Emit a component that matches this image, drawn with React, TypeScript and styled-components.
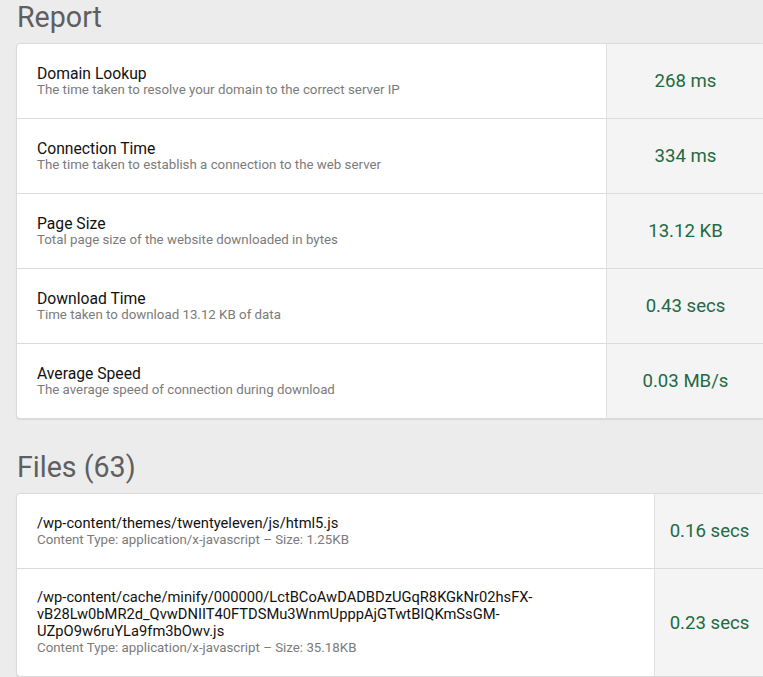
import React from "react";
import styled, { createGlobalStyle } from "styled-components";

const GlobalStyle = createGlobalStyle`
  html, body {
    margin: 0;
    padding: 0;
    background: #ececec;
    overflow: hidden;
  }
  body {
    font-family: Roboto, "Liberation Sans", Arial, sans-serif;
    -webkit-font-smoothing: antialiased;
  }
`;

const Page = styled.div`
  padding: 0 0 0 16px;
  width: 749px;
`;

const Heading = styled.h2`
  margin: 0;
  font-size: 28.6px;
  line-height: 34px;
  font-weight: 400;
  color: #5f5f5f;
  padding-left: 1px;
`;

const Card = styled.div`
  margin: 9px 0 31px;
  background: #fff;
  border: 1px solid #dadada;
  border-radius: 4px;
  box-shadow: 0 1px 1px rgba(0, 0, 0, 0.08);
  overflow: hidden;
`;

const Row = styled.div<{ $valueWidth: number }>`
  display: grid;
  grid-template-columns: 1fr ${(p) => p.$valueWidth}px;
  border-top: 1px solid #dcdcdc;
  &:first-child {
    border-top: none;
  }
`;

const Info = styled.div<{ $minHeight: number }>`
  display: flex;
  flex-direction: column;
  justify-content: center;
  min-height: ${(p) => p.$minHeight}px;
  padding: 20px;
  box-sizing: border-box;
`;

const Title = styled.div`
  font-size: 15.7px;
  line-height: 17px;
  color: #111;
`;

const Path = styled.div`
  font-size: 14.7px;
  line-height: 17px;
  color: #111;
  overflow-wrap: anywhere;
`;

const Sub = styled.div`
  font-size: 13.3px;
  line-height: 16px;
  color: #7b7b7b;
`;

const Value = styled.div`
  display: flex;
  align-items: center;
  justify-content: center;
  background: #f4f4f4;
  border-left: 1px solid #e2e2e2;
  font-size: 18.6px;
  color: #1f6a42;
`;

const report = [
  { title: "Domain Lookup", sub: "The time taken to resolve your domain to the correct server IP", value: "268 ms" },
  { title: "Connection Time", sub: "The time taken to establish a connection to the web server", value: "334 ms" },
  { title: "Page Size", sub: "Total page size of the website downloaded in bytes", value: "13.12 KB" },
  { title: "Download Time", sub: "Time taken to download 13.12 KB of data", value: "0.43 secs" },
  { title: "Average Speed", sub: "The average speed of connection during download", value: "0.03 MB/s" },
];

const files = [
  { path: "/wp-content/themes/twentyeleven/js/html5.js", sub: "Content Type: application/x-javascript \u2013 Size: 1.25KB", value: "0.16 secs" },
  {
    path: "/wp-content/cache/minify/000000/LctBCoAwDADBDzUGqR8KGkNr02hsFX-vB28Lw0bMR2d_QvwDNIIT40FTDSMu3WnmUpppAjGTwtBIQKmSsGM-UZpO9w6ruYLa9fm3bOwv.js",
    sub: "Content Type: application/x-javascript \u2013 Size: 35.18KB",
    value: "0.23 secs",
  },
];

export default function App() {
  return (
    <>
      <GlobalStyle />
      <Page>
        <Heading>Report</Heading>
        <Card>
          {report.map((r) => (
            <Row key={r.title} $valueWidth={158}>
              <Info $minHeight={74}>
                <Title>{r.title}</Title>
                <Sub>{r.sub}</Sub>
              </Info>
              <Value>{r.value}</Value>
            </Row>
          ))}
        </Card>
        <Heading>Files (63)</Heading>
        <Card>
          {files.map((f) => (
            <Row key={f.path} $valueWidth={110}>
              <Info $minHeight={74}>
                <Path>{f.path}</Path>
                <Sub>{f.sub}</Sub>
              </Info>
              <Value>{f.value}</Value>
            </Row>
          ))}
        </Card>
      </Page>
    </>
  );
}
